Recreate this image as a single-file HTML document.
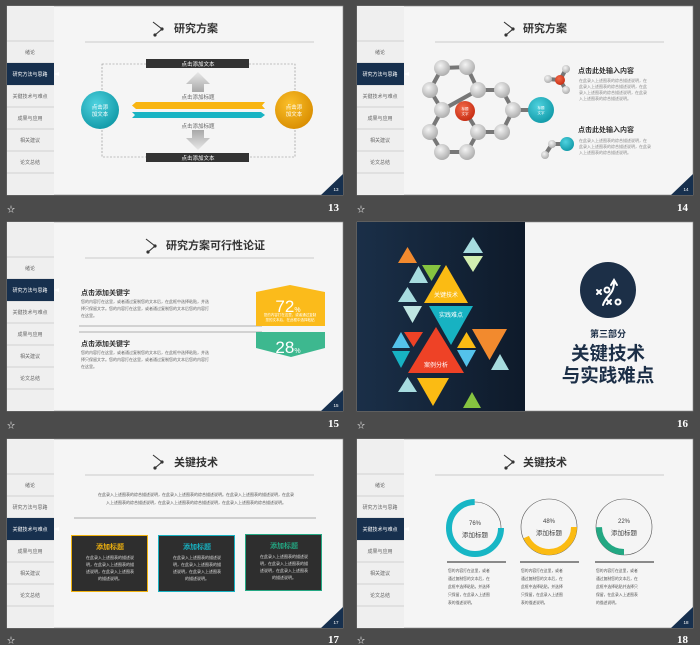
<!DOCTYPE html>
<html><head><meta charset="utf-8"><style>
html,body{margin:0;padding:0;background:#4b4b4b;}
svg{display:block;font-family:"Liberation Sans","Noto Sans CJK SC",sans-serif;}
</style></head><body>
<svg width="700" height="645" viewBox="0 0 700 645" xmlns="http://www.w3.org/2000/svg">
<defs>
<linearGradient id="gu" x1="0" y1="0" x2="0" y2="1"><stop offset="0" stop-color="#e8e8e8"/><stop offset="1" stop-color="#a8a8a8"/></linearGradient>
<linearGradient id="gd" x1="0" y1="0" x2="0" y2="1"><stop offset="0" stop-color="#a8a8a8"/><stop offset="1" stop-color="#e8e8e8"/></linearGradient>
<radialGradient id="ball" cx="0.4" cy="0.35" r="0.7"><stop offset="0" stop-color="#f4f4f4"/><stop offset="1" stop-color="#a9a9a9"/></radialGradient>
<radialGradient id="redb" cx="0.4" cy="0.35" r="0.7"><stop offset="0" stop-color="#f26a4a"/><stop offset="1" stop-color="#c52a10"/></radialGradient>
<radialGradient id="teb" cx="0.4" cy="0.35" r="0.7"><stop offset="0" stop-color="#4fd2df"/><stop offset="1" stop-color="#0f98a6"/></radialGradient>
<radialGradient id="orb" cx="0.4" cy="0.35" r="0.7"><stop offset="0" stop-color="#fbc02a"/><stop offset="1" stop-color="#d88c00"/></radialGradient>
<linearGradient id="navy" x1="0" y1="0" x2="1" y2="0"><stop offset="0" stop-color="#1a2f48"/><stop offset="1" stop-color="#0e1a2a"/></linearGradient>
</defs>
<rect width="700" height="645" fill="#4b4b4b"/>

<g font-size="5" fill="#666" text-anchor="middle">
<g transform="translate(7,6)">
<rect width="336" height="189" fill="#f5f5f5" stroke="#8a8a8a" stroke-width="0.6"/>
<rect width="47" height="189" fill="#efefef"/>
<g stroke="#c8c8c8" stroke-width="0.8"><line x1="0" y1="35" x2="47" y2="35"/><line x1="0" y1="57" x2="47" y2="57"/><line x1="0" y1="79" x2="47" y2="79"/><line x1="0" y1="101" x2="47" y2="101"/><line x1="0" y1="123" x2="47" y2="123"/><line x1="0" y1="145" x2="47" y2="145"/><line x1="0" y1="167" x2="47" y2="167"/></g>
<rect x="0" y="57" width="47" height="22" fill="#17304e"/><polygon points="47,68 52,66 52,70" fill="#fff"/>
<text x="23" y="48">绪论</text><text x="23" y="70" fill="#fff">研究方法与思路</text><text x="23" y="92">关键技术与难点</text><text x="23" y="114">成果与应用</text><text x="23" y="136">相关建议</text><text x="23" y="158">论文总结</text>
<line x1="78" y1="36" x2="307" y2="36" stroke="#ccc"/>
<polygon points="314,189 336,189 336,168" fill="#17304e"/><text x="329" y="185" fill="#fff" font-size="4.5">13</text>
</g>
<g transform="translate(357,6)">
<rect width="336" height="189" fill="#f5f5f5" stroke="#8a8a8a" stroke-width="0.6"/>
<rect width="47" height="189" fill="#efefef"/>
<g stroke="#c8c8c8" stroke-width="0.8"><line x1="0" y1="35" x2="47" y2="35"/><line x1="0" y1="57" x2="47" y2="57"/><line x1="0" y1="79" x2="47" y2="79"/><line x1="0" y1="101" x2="47" y2="101"/><line x1="0" y1="123" x2="47" y2="123"/><line x1="0" y1="145" x2="47" y2="145"/><line x1="0" y1="167" x2="47" y2="167"/></g>
<rect x="0" y="57" width="47" height="22" fill="#17304e"/><polygon points="47,68 52,66 52,70" fill="#fff"/>
<text x="23" y="48">绪论</text><text x="23" y="70" fill="#fff">研究方法与思路</text><text x="23" y="92">关键技术与难点</text><text x="23" y="114">成果与应用</text><text x="23" y="136">相关建议</text><text x="23" y="158">论文总结</text>
<line x1="78" y1="36" x2="307" y2="36" stroke="#ccc"/>
<polygon points="314,189 336,189 336,168" fill="#17304e"/><text x="329" y="185" fill="#fff" font-size="4.5">14</text>
</g>
<g transform="translate(7,222)">
<rect width="336" height="189" fill="#f5f5f5" stroke="#8a8a8a" stroke-width="0.6"/>
<rect width="47" height="189" fill="#efefef"/>
<g stroke="#c8c8c8" stroke-width="0.8"><line x1="0" y1="35" x2="47" y2="35"/><line x1="0" y1="57" x2="47" y2="57"/><line x1="0" y1="79" x2="47" y2="79"/><line x1="0" y1="101" x2="47" y2="101"/><line x1="0" y1="123" x2="47" y2="123"/><line x1="0" y1="145" x2="47" y2="145"/><line x1="0" y1="167" x2="47" y2="167"/></g>
<rect x="0" y="57" width="47" height="22" fill="#17304e"/><polygon points="47,68 52,66 52,70" fill="#fff"/>
<text x="23" y="48">绪论</text><text x="23" y="70" fill="#fff">研究方法与思路</text><text x="23" y="92">关键技术与难点</text><text x="23" y="114">成果与应用</text><text x="23" y="136">相关建议</text><text x="23" y="158">论文总结</text>
<line x1="78" y1="36" x2="307" y2="36" stroke="#ccc"/>
<polygon points="314,189 336,189 336,168" fill="#17304e"/><text x="329" y="185" fill="#fff" font-size="4.5">15</text>
</g>
<g transform="translate(7,439)">
<rect width="336" height="189" fill="#f5f5f5" stroke="#8a8a8a" stroke-width="0.6"/>
<rect width="47" height="189" fill="#efefef"/>
<g stroke="#c8c8c8" stroke-width="0.8"><line x1="0" y1="35" x2="47" y2="35"/><line x1="0" y1="57" x2="47" y2="57"/><line x1="0" y1="79" x2="47" y2="79"/><line x1="0" y1="101" x2="47" y2="101"/><line x1="0" y1="123" x2="47" y2="123"/><line x1="0" y1="145" x2="47" y2="145"/><line x1="0" y1="167" x2="47" y2="167"/></g>
<rect x="0" y="79" width="47" height="22" fill="#17304e"/><polygon points="47,90 52,88 52,92" fill="#fff"/>
<text x="23" y="48">绪论</text><text x="23" y="70">研究方法与思路</text><text x="23" y="92" fill="#fff">关键技术与难点</text><text x="23" y="114">成果与应用</text><text x="23" y="136">相关建议</text><text x="23" y="158">论文总结</text>
<line x1="78" y1="36" x2="307" y2="36" stroke="#ccc"/>
<polygon points="314,189 336,189 336,168" fill="#17304e"/><text x="329" y="185" fill="#fff" font-size="4.5">17</text>
</g>
<g transform="translate(357,439)">
<rect width="336" height="189" fill="#f5f5f5" stroke="#8a8a8a" stroke-width="0.6"/>
<rect width="47" height="189" fill="#efefef"/>
<g stroke="#c8c8c8" stroke-width="0.8"><line x1="0" y1="35" x2="47" y2="35"/><line x1="0" y1="57" x2="47" y2="57"/><line x1="0" y1="79" x2="47" y2="79"/><line x1="0" y1="101" x2="47" y2="101"/><line x1="0" y1="123" x2="47" y2="123"/><line x1="0" y1="145" x2="47" y2="145"/><line x1="0" y1="167" x2="47" y2="167"/></g>
<rect x="0" y="79" width="47" height="22" fill="#17304e"/><polygon points="47,90 52,88 52,92" fill="#fff"/>
<text x="23" y="48">绪论</text><text x="23" y="70">研究方法与思路</text><text x="23" y="92" fill="#fff">关键技术与难点</text><text x="23" y="114">成果与应用</text><text x="23" y="136">相关建议</text><text x="23" y="158">论文总结</text>
<line x1="78" y1="36" x2="307" y2="36" stroke="#ccc"/>
<polygon points="314,189 336,189 336,168" fill="#17304e"/><text x="329" y="185" fill="#fff" font-size="4.5">18</text>
</g>
<rect x="357" y="222" width="336" height="189" fill="#f5f5f5" stroke="#8a8a8a" stroke-width="0.6"/>
<rect x="357" y="222" width="168" height="189" fill="url(#navy)"/>
</g>

<g fill="none" stroke="#333" stroke-width="1.1">
<path d="M153,22 L162,29 L155,35"/><path d="M504,22 L513,29 L506,35"/>
<path d="M146,239 L155,246 L148,252"/><path d="M153,455 L162,462 L155,468"/><path d="M504,455 L513,462 L506,468"/>
</g>
<g fill="#333"><circle cx="162" cy="29" r="1.6"/><circle cx="155" cy="35" r="1.6"/><circle cx="513" cy="29" r="1.6"/><circle cx="506" cy="35" r="1.6"/><circle cx="155" cy="246" r="1.6"/><circle cx="148" cy="252" r="1.6"/><circle cx="162" cy="462" r="1.6"/><circle cx="155" cy="468" r="1.6"/><circle cx="513" cy="462" r="1.6"/><circle cx="506" cy="468" r="1.6"/></g>
<g font-size="11" font-weight="bold" fill="#333">
<text x="174" y="32">研究方案</text><text x="523" y="32">研究方案</text><text x="166" y="249">研究方案可行性论证</text><text x="174" y="466">关键技术</text><text x="523" y="466">关键技术</text>
</g>

<g font-family="Liberation Serif,serif" font-weight="bold" font-size="11" fill="#fff" text-anchor="end">
<text x="339" y="211">13</text><text x="688" y="211">14</text><text x="339" y="427">15</text><text x="688" y="427">16</text><text x="339" y="643">17</text><text x="688" y="643">18</text>
</g>
<g font-size="8" fill="#eee"><text x="7" y="212">☆</text><text x="357" y="212">☆</text><text x="7" y="428">☆</text><text x="357" y="428">☆</text><text x="7" y="643">☆</text><text x="357" y="643">☆</text></g>

<rect x="102" y="64" width="193" height="93" fill="none" stroke="#888" stroke-width="0.6" stroke-dasharray="2,1.5"/>
<rect x="146" y="59" width="103" height="9" fill="#333"/><rect x="146" y="153" width="103" height="9" fill="#333"/>
<g font-size="5.5" fill="#fff" text-anchor="middle"><text x="198" y="66">点击添加文本</text><text x="198" y="160">点击添加文本</text></g>
<polygon points="186,84 198,72 210,84 204,84 204,92 192,92 192,84" fill="url(#gu)"/>
<polygon points="192,130 204,130 204,138 210,138 198,150 186,138 192,138" fill="url(#gd)"/>
<g font-size="5.5" fill="#666" text-anchor="middle"><text x="198" y="99">点击添加标题</text><text x="198" y="128">点击添加标题</text></g>
<polygon points="136,102 265,102 262,105.5 265,109 136,109 132,105.5" fill="#f8b512"/>
<polygon points="132,112 261,112 265,115 261,118 132,118 135,115" fill="#19b4c3"/>
<circle cx="100" cy="110" r="19" fill="url(#teb)"/><circle cx="294" cy="110" r="19" fill="url(#orb)"/>
<g font-size="5.5" fill="#fff" text-anchor="middle"><text x="100" y="109">点击添</text><text x="100" y="116">加文本</text><text x="294" y="109">点击添</text><text x="294" y="116">加文本</text></g>

<g stroke="#777" stroke-width="4" fill="none">
<polyline points="442,68 467,67 478,90 442,110 430,90 442,68"/>
<polyline points="478,90 502,90 513,110 502,132 478,132 465,111"/>
<polyline points="442,110 430,132 442,152 467,152 478,132"/>
<line x1="513" y1="110" x2="541" y2="110"/>
<polyline points="566,69 560,80 548,79"/><line x1="560" y1="80" x2="566" y2="90"/>
<polyline points="567,144 552,144 545,155"/>
</g>
<g fill="url(#ball)">
<circle cx="442" cy="68" r="8"/><circle cx="467" cy="67" r="8"/><circle cx="430" cy="90" r="8"/><circle cx="478" cy="90" r="8"/><circle cx="502" cy="90" r="8"/><circle cx="442" cy="110" r="8"/><circle cx="513" cy="110" r="8"/><circle cx="430" cy="132" r="8"/><circle cx="478" cy="132" r="8"/><circle cx="502" cy="132" r="8"/><circle cx="442" cy="152" r="8"/><circle cx="467" cy="152" r="8"/>
<circle cx="566" cy="69" r="4"/><circle cx="548" cy="79" r="4"/><circle cx="566" cy="90" r="4"/><circle cx="552" cy="144" r="4"/><circle cx="545" cy="155" r="4"/>
</g>
<circle cx="465" cy="111" r="10" fill="url(#redb)"/><circle cx="541" cy="110" r="13" fill="url(#teb)"/>
<circle cx="560" cy="80" r="5" fill="url(#redb)"/><circle cx="567" cy="144" r="7" fill="url(#teb)"/>
<g font-size="3.5" fill="#fff" text-anchor="middle"><text x="465" y="110">标题</text><text x="465" y="115">文字</text><text x="541" y="109">标题</text><text x="541" y="114">文字</text></g>
<g font-size="7" font-weight="bold" fill="#333"><text x="578" y="73">点击此处输入内容</text><text x="578" y="132">点击此处输入内容</text></g>
<g font-size="4" fill="#888"><text x="579" y="82">在此录入上述图表的综合描述说明，在</text><text x="579" y="88">此录入上述图表的综合描述说明，在此</text><text x="579" y="94">录入上述图表的综合描述说明，在此录</text><text x="579" y="100">入上述图表的综合描述说明。</text>
<text x="579" y="142">在此录入上述图表的综合描述说明，在</text><text x="579" y="148">此录入上述图表的综合描述说明，在此录</text><text x="579" y="154">入上述图表的综合描述说明。</text></g>

<g font-size="7" font-weight="bold" fill="#333"><text x="81" y="295">点击添加关键字</text><text x="81" y="346">点击添加关键字</text></g>
<g font-size="4" fill="#666"><text x="81" y="303">您的内容打在这里，或者通过复制您的文本后，在此框中选择粘贴，并选</text><text x="81" y="310">择只保留文字。您的内容打在这里，或者通过复制您的文本后您的内容打</text><text x="81" y="317">在这里。</text>
<text x="81" y="354">您的内容打在这里，或者通过复制您的文本后，在此框中选择粘贴，并选</text><text x="81" y="361">择只保留文字。您的内容打在这里，或者通过复制您的文本后您的内容打</text><text x="81" y="368">在这里。</text></g>
<line x1="79" y1="326" x2="262" y2="326" stroke="#999" stroke-width="0.8"/><line x1="79" y1="332" x2="262" y2="332" stroke="#999" stroke-width="0.8"/>
<polygon points="256,292 290,285 325,292 325,326 256,326" fill="#fbbb1b"/>
<polygon points="256,332 325,332 325,348 291,357 256,348" fill="#3db88f"/>
<g fill="#fff" text-anchor="middle"><text x="288" y="312" font-size="17">72<tspan font-size="7">%</tspan></text><text x="290" y="316" font-size="3.5">您的内容打在这里，或者通过复制</text><text x="290" y="321" font-size="3.5">您的文本后，在此框中选择粘贴</text><text x="288" y="353" font-size="17">28<tspan font-size="7">%</tspan></text></g>

<g>
<polygon points="398,263 407.5,247 417,263" fill="#f28a2e"/>
<polygon points="463,253 473,237 483,253" fill="#a7dcdf"/>
<polygon points="463,256 483,256 473,272" fill="#d2eeb0"/>
<polygon points="409,283 418.5,266 428,283" fill="#a7dcdf"/>
<polygon points="422,265 441,265 431.5,281" fill="#86c440"/>
<polygon points="424,303 446,265 468,303" fill="#fbbb13"/>
<polygon points="398,302 407.5,287 417,302" fill="#a7dcdf"/>
<polygon points="403,306 422,306 412.5,323" fill="#bfe6e3"/>
<polygon points="429,306 473,306 451,345" fill="#17b2c2"/>
<polygon points="404,332 423,332 413.5,347" fill="#ee4226"/>
<polygon points="392,348 401,332 410,348" fill="#54c2ea"/>
<polygon points="392,351 410,351 401,368" fill="#17b2c2"/>
<polygon points="457,348 466.5,332 476,348" fill="#fbbb13"/>
<polygon points="457,350 476,350 466.5,367" fill="#54c2ea"/>
<polygon points="408,373 436,327 464,373" fill="#ee4226"/>
<polygon points="472,329 507,329 489.5,360" fill="#f28a2e"/>
<polygon points="491,370 500,354 509,370" fill="#a7dcdf"/>
<polygon points="417,378 449,378 433,406" fill="#fbbb13"/>
<polygon points="398,392 407.5,377 417,392" fill="#a7dcdf"/>
<polygon points="463,408 472,392 481,408" fill="#86c440"/>
</g>
<g font-size="6" fill="#fff" text-anchor="middle"><text x="446" y="297">关键技术</text><text x="451" y="317">实践难点</text><text x="436" y="367">案例分析</text></g>
<circle cx="608" cy="290" r="28" fill="#1c2f47"/>
<g stroke="#fff" stroke-width="2" fill="none" stroke-linecap="round">
<path d="M597,290 l4,4 M601,290 l-4,4"/><path d="M607,300 l4,4 M611,300 l-4,4"/>
<circle cx="607" cy="290" r="2.5"/><circle cx="618" cy="302" r="2.5"/>
<path d="M603,305 C606,295 614,295 614,282"/><path d="M611,285 L614,280 L617,285"/>
</g>
<g fill="#1c2f47" font-weight="bold" text-anchor="middle"><text x="608" y="337" font-size="9">第三部分</text><text x="608" y="360" font-size="18.5">关键技术</text><text x="608" y="382" font-size="18.5">与实践难点</text></g>

<g font-size="4" fill="#555" text-anchor="middle"><text x="196" y="496">在此录入上述图表的综合描述说明，在此录入上述图表的综合描述说明。在此录入上述图表的描述说明，在此录</text><text x="196" y="504">入上述图表的综合描述说明，在此录入上述图表的综合描述说明，在此录入上述图表的综合描述说明。</text></g>
<line x1="74" y1="518" x2="316" y2="518" stroke="#bbb" stroke-width="1.2"/>
<rect x="71.5" y="535.5" width="76" height="56" fill="#2e2e2e" stroke="#f0b20e"/>
<rect x="158.5" y="535.5" width="76" height="56" fill="#2e2e2e" stroke="#17b2c2"/>
<rect x="245.5" y="534.5" width="76" height="56" fill="#2e2e2e" stroke="#23a883"/>
<g font-size="7" font-weight="bold" text-anchor="middle"><text x="110" y="549" fill="#f0b20e">添加标题</text><text x="197" y="549" fill="#17b2c2">添加标题</text><text x="284" y="548" fill="#23a883">添加标题</text></g>
<g font-size="4" fill="#ddd" text-anchor="middle">
<text x="110" y="559">在此录入上述图表的描述说</text><text x="110" y="566">明，在此录入上述图表的描</text><text x="110" y="573">述说明，在此录入上述图表</text><text x="110" y="580">的描述说明。</text>
<text x="197" y="559">在此录入上述图表的描述说</text><text x="197" y="566">明，在此录入上述图表的描</text><text x="197" y="573">述说明，在此录入上述图表</text><text x="197" y="580">的描述说明。</text>
<text x="284" y="558">在此录入上述图表的描述说</text><text x="284" y="565">明，在此录入上述图表的描</text><text x="284" y="572">述说明，在此录入上述图表</text><text x="284" y="579">的描述说明。</text>
</g>

<g fill="none">
<circle cx="475" cy="528" r="26" stroke="#555" stroke-width="0.6"/>
<circle cx="475" cy="528" r="26" stroke="#17b6c5" stroke-width="6" stroke-dasharray="122 200"/>
<circle cx="549" cy="527" r="28" stroke="#555" stroke-width="0.6"/>
<circle cx="549" cy="527" r="25" stroke="#fbbb13" stroke-width="6" stroke-dasharray="68 200"/>
<circle cx="624" cy="527" r="28" stroke="#555" stroke-width="0.6"/>
<circle cx="624" cy="527" r="25" stroke="#23a883" stroke-width="6" stroke-dasharray="39 200" transform="rotate(90 624 527)"/>
</g>
<g font-size="6" fill="#444" text-anchor="middle"><text x="475" y="525">76%</text><text x="549" y="523">48%</text><text x="624" y="523">22%</text></g>
<g font-size="6.5" fill="#444" text-anchor="middle"><text x="475" y="537">添加标题</text><text x="549" y="535">添加标题</text><text x="624" y="535">添加标题</text></g>
<g stroke="#666" stroke-width="1.5"><line x1="447" y1="562" x2="506" y2="562"/><line x1="520" y1="562" x2="579" y2="562"/><line x1="595" y1="562" x2="654" y2="562"/></g>
<g font-size="3.8" fill="#555">
<text x="448" y="572">您的内容打在这里，或者</text><text x="448" y="580">通过复制您的文本后，在</text><text x="448" y="588">此框中选择粘贴，并选择</text><text x="448" y="596">只保留，在此录入上述图</text><text x="448" y="604">表的描述说明。</text>
<text x="521" y="572">您的内容打在这里，或者</text><text x="521" y="580">通过复制您的文本后，在</text><text x="521" y="588">此框中选择粘贴，并选择</text><text x="521" y="596">只保留，在此录入上述图</text><text x="521" y="604">表的描述说明。</text>
<text x="596" y="572">您的内容打在这里，或者</text><text x="596" y="580">通过复制您的文本后，在</text><text x="596" y="588">此框中选择粘贴并选择只</text><text x="596" y="596">保留，在此录入上述图表</text><text x="596" y="604">的描述说明。</text>
</g>
</svg>
</body></html>
